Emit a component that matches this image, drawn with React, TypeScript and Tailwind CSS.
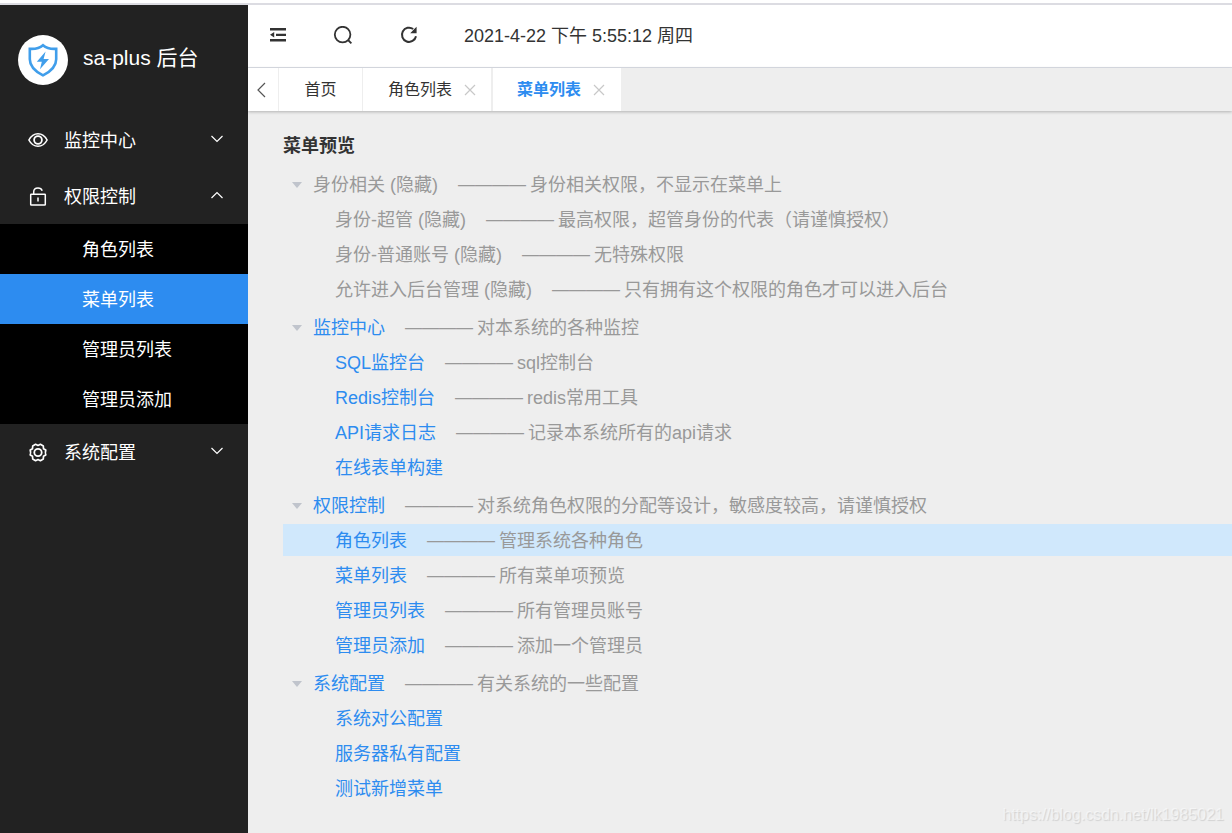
// src/App.tsx
import { useState, type ReactNode } from 'react';

interface MenuNode {
  name: string;
  info?: string;
  hidden?: boolean;
  children?: MenuNode[];
}

const MENU_TREE: MenuNode[] = [
  {
    name: '身份相关',
    info: '身份相关权限，不显示在菜单上',
    hidden: true,
    children: [
      { name: '身份-超管', info: '最高权限，超管身份的代表（请谨慎授权）', hidden: true },
      { name: '身份-普通账号', info: '无特殊权限', hidden: true },
      { name: '允许进入后台管理', info: '只有拥有这个权限的角色才可以进入后台', hidden: true },
    ],
  },
  {
    name: '监控中心',
    info: '对本系统的各种监控',
    children: [
      { name: 'SQL监控台', info: 'sql控制台' },
      { name: 'Redis控制台', info: 'redis常用工具' },
      { name: 'API请求日志', info: '记录本系统所有的api请求' },
      { name: '在线表单构建' },
    ],
  },
  {
    name: '权限控制',
    info: '对系统角色权限的分配等设计，敏感度较高，请谨慎授权',
    children: [
      { name: '角色列表', info: '管理系统各种角色' },
      { name: '菜单列表', info: '所有菜单项预览' },
      { name: '管理员列表', info: '所有管理员账号' },
      { name: '管理员添加', info: '添加一个管理员' },
    ],
  },
  {
    name: '系统配置',
    info: '有关系统的一些配置',
    children: [{ name: '系统对公配置' }, { name: '服务器私有配置' }, { name: '测试新增菜单' }],
  },
];

const SUB_MENU = ['角色列表', '菜单列表', '管理员列表', '管理员添加'];

function ShieldLogo() {
  return (
    <svg viewBox="0 0 32 34" className="w-8 h-[34px]" fill="none">
      <path
        d="M16 2.200c-3.200 2.800-7.400 4-13.200 3.600v10.400c0 7.200 5 12 13.200 16.200 8.200-4.200 13.200-9 13.200-16.200V5.800C23.400 6.200 19.200 5 16 2.200z"
        stroke="#409eeb"
        strokeWidth="2.600"
        strokeLinejoin="miter"
      />
      <path d="M18.600 8.600 9.800 18.800h5l-1.800 7.400 9-10.200h-5.400z" fill="#409eeb" />
    </svg>
  );
}

function EyeIcon() {
  return (
    <svg viewBox="0 0 20 18" className="w-5 h-[18px]" fill="none" stroke="currentColor" strokeWidth="1.600">
      <path d="M.9 8C3 4 6.200 1.700 10 1.700S17 4 19.100 8C17 12 13.800 14.300 10 14.300S3 12 .9 8z" />
      <circle cx="10" cy="8" r="3.900" strokeWidth="1.800" />
    </svg>
  );
}

function UnlockIcon() {
  return (
    <svg viewBox="0 0 20 20" className="w-5 h-5" fill="none" stroke="currentColor" strokeWidth="1.500">
      <rect x="2.700" y="7.200" width="14.600" height="10.800" rx=".6" />
      <path d="M5.700 7.200V5.100C5.700 2.700 7.500 1.100 10 1.100c2 0 3.600 1 4.200 2.600M10 10.500v4" />
    </svg>
  );
}

function GearIcon() {
  return (
    <svg viewBox="0 0 20 20" className="w-5 h-5" fill="none" stroke="currentColor" strokeWidth="1.700">
      <path
        d="M7.600 1.300 10 2.500l2.400-1.200 2.900 1.700.2 2.700 2.300 1.400c-.6 1.600-.6 3.200 0 4.800l-2.300 1.400-.2 2.700-2.900 1.700L10 16.500l-2.400 1.200-2.900-1.700-.2-2.700-2.300-1.400c.6-1.600.6-3.200 0-4.800l2.300-1.400.2-2.700z"
        strokeLinejoin="round"
      />
      <circle cx="10" cy="9.500" r="3.700" strokeWidth="1.800" />
    </svg>
  );
}

function Chevron({ up }: { up?: boolean }) {
  return (
    <svg viewBox="0 0 14 8" className="w-3.5 h-2 mb-1" fill="none" stroke="currentColor" strokeWidth="1.200">
      <path d={up ? 'M1.500 7 7 1.500 12.500 7' : 'M1.500 1 7 6.500 12.500 1'} />
    </svg>
  );
}

function CloseIcon() {
  return (
    <svg viewBox="0 0 12 12" className="w-3 h-3" fill="none" stroke="#c8c8c8" strokeWidth="1.200">
      <path d="M1 1l10 10M11 1 1 11" />
    </svg>
  );
}

interface SideItemProps {
  icon: ReactNode;
  label: string;
  open?: boolean;
  onClick?: () => void;
}

function SideItem({ icon, label, open, onClick }: SideItemProps) {
  return (
    <button onClick={onClick} aria-expanded={!!open} className="w-full h-14 pt-0.5 pl-7 pr-6 flex items-center text-white">
      {icon}
      <span className="ml-4 flex-1 text-left">{label}</span>
      <Chevron up={open} />
    </button>
  );
}

function NodeLabel({ node }: { node: MenuNode }) {
  return (
    <>
      {node.hidden ? (
        <span>{node.name} (隐藏)</span>
      ) : (
        <a href="#" className="text-[#2d8cf0]">
          {node.name}
        </a>
      )}
      {node.info && (
        <>
          <span className="ml-5 mr-1 text-[17px]">————</span>
          <span>{node.info}</span>
        </>
      )}
    </>
  );
}

function TreeGroup({ node }: { node: MenuNode }) {
  const [open, setOpen] = useState(true);

  return (
    <li className="pt-1.5">
      <div className="h-8 pt-0.5 pl-2 flex items-center">
        <button aria-label={node.name} aria-expanded={open} onClick={() => setOpen(!open)} className="mr-2.5">
          <svg viewBox="0 0 12 12" className="w-3 h-3" fill="#c0c4cc">
            <path d={open ? 'M1 3h10L6 9z' : 'M3 1v10l6-5z'} />
          </svg>
        </button>
        <NodeLabel node={node} />
      </div>
      {open && (
        <ul>
          {node.children?.map((child) => (
            <li
              key={child.name}
              className={`h-8 mt-[3px] pt-0.5 pl-[52px] flex items-center ${
                child.name === '角色列表' ? 'bg-[#d0e8fc]' : ''
              }`}
            >
              <NodeLabel node={child} />
            </li>
          ))}
        </ul>
      )}
    </li>
  );
}

export default function App() {
  const [authOpen, setAuthOpen] = useState(true);
  const [active, setActive] = useState('菜单列表');

  return (
    <div className="relative min-h-screen flex flex-col bg-white text-[18px] whitespace-nowrap font-['Liberation_Sans','Noto_Sans_CJK_SC',sans-serif]">
      <div className="h-[5px] border-b-2 border-[#dcdce2]" />
      <div className="flex-1 flex">
        {/* Sidebar */}
        <aside className="w-[248px] shrink-0 bg-[#222222] text-white">
          <div className="h-[107px] pt-[30px] pl-[18px] flex items-start">
            <div className="w-[50px] h-[50px] rounded-full bg-white flex items-center justify-center">
              <ShieldLogo />
            </div>
            <span className="ml-[15px] leading-[46px] text-[21px]">sa-plus 后台</span>
          </div>
          <nav>
            <SideItem icon={<EyeIcon />} label="监控中心" />
            <SideItem
              icon={<UnlockIcon />}
              label="权限控制"
              open={authOpen}
              onClick={() => setAuthOpen(!authOpen)}
            />
            {authOpen && (
              <div className="bg-black">
                {SUB_MENU.map((label) => (
                  <button
                    key={label}
                    onClick={() => setActive(label)}
                    className={`block w-full h-[50px] pt-0.5 pl-[82px] text-left ${active === label ? 'bg-[#2d8cf0]' : ''}`}
                  >
                    {label}
                  </button>
                ))}
              </div>
            )}
            <SideItem icon={<GearIcon />} label="系统配置" />
          </nav>
        </aside>

        <div className="flex-1 min-w-0 flex flex-col bg-[#eeeeee]">
          {/* Toolbar */}
          <header className="h-[63px] pl-5 flex items-center bg-white border-b border-[#dcdfe6] text-[#333333]">
            <button aria-label="折叠菜单" className="w-5 mr-[45px]">
              <svg viewBox="0 0 20 20" className="w-5 h-5" fill="currentColor">
                <path d="M2 2h16v2.500H2zM8 7.700h10v2.200H8zM2 13h16v2.500H2zM2 8.800l4.200-2.700v5.400z" />
              </svg>
            </button>
            <button aria-label="搜索" className="w-5 mr-[46px]">
              <svg viewBox="0 0 20 20" className="w-5 h-5" fill="none" stroke="currentColor" strokeWidth="1.800">
                <circle cx="9.600" cy="8.600" r="7.800" />
                <path d="M15 14l3.400 3.400" />
              </svg>
            </button>
            <button aria-label="刷新" className="w-5 mr-[45px]">
              <svg viewBox="0 0 20 20" className="w-5 h-5" fill="none" stroke="currentColor" strokeWidth="2">
                <path d="M17 10.200A7.100 7.100 0 1 1 14.200 3" />
                <path d="M17.600.8v6.400h-6.400l2.200-2.200 1.800-2z" fill="currentColor" stroke="none" />
              </svg>
            </button>
            <time>2021-4-22 下午 5:55:12 周四</time>
          </header>

          {/* Tabs */}
          <div className="h-[43px] flex text-[16px] text-[#333333] shadow-[0_1px_3px_rgba(0,0,0,0.25)]">
            <button
              aria-label="向左"
              className="w-[31px] pr-1 flex items-center justify-center bg-white border-r border-[#eeeeee] text-[#555555]"
            >
              <svg viewBox="0 0 9 16" className="w-[9px] h-4" fill="none" stroke="currentColor" strokeWidth="1.200">
                <path d="M8 1 1 8l7 7" />
              </svg>
            </button>
            <button className="w-[84px] bg-white border-r border-[#eeeeee]">首页</button>
            <div className="w-[130px] pl-[25px] flex items-center bg-white border-r-2 border-[#eeeeee]">
              <button>角色列表</button>
              <button aria-label="关闭角色列表" className="ml-3">
                <CloseIcon />
              </button>
            </div>
            <div className="w-[128px] pl-6 flex items-center bg-white">
              <button className="font-bold text-[#2d8cf0]">菜单列表</button>
              <button aria-label="关闭菜单列表" className="ml-3">
                <CloseIcon />
              </button>
            </div>
          </div>

          {/* Menu preview */}
          <main className="flex-1 pt-[21px] pl-[35px] pb-5 text-[#999999]">
            <h1 className="leading-7 font-bold text-[#333333]">菜单预览</h1>
            <ul className="pt-0.5">
              {MENU_TREE.map((node) => (
                <TreeGroup key={node.name} node={node} />
              ))}
            </ul>
          </main>
        </div>
      </div>
      <div className="absolute right-2 bottom-1.5 text-[16px] text-white/50 [text-shadow:1px_1px_1px_rgba(0,0,0,0.12)]">
        https://blog.csdn.net/lk1985021
      </div>
    </div>
  );
}
